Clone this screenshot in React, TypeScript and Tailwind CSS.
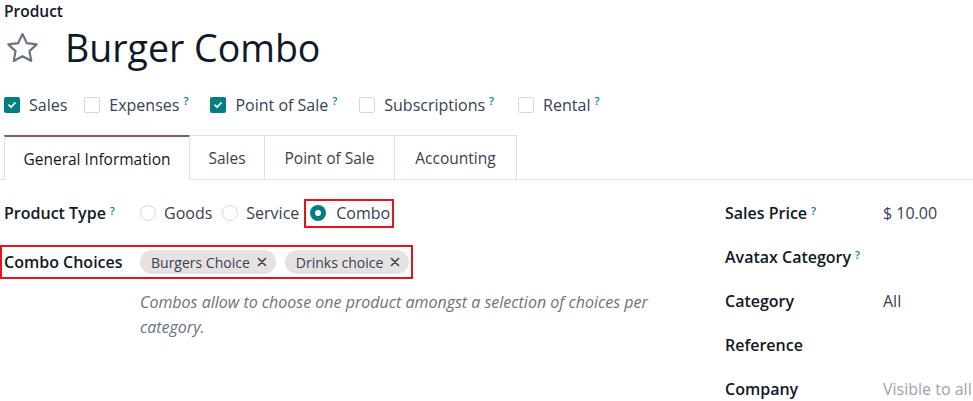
import React from "react";

const Q = () => (
  <sup className="ml-[4px] text-[11px] font-semibold text-[#017e84] relative -top-[4px]">?</sup>
);

const Check = ({ on }: { on: boolean }) =>
  on ? (
    <span className="block shrink-0 w-4 h-4 rounded-[2px] bg-[#017e84] flex items-center justify-center">
      <svg width="10" height="10" viewBox="0 0 10 10">
        <path d="M2 5.2 L4.1 7.2 L8 3" fill="none" stroke="white" strokeWidth="1.8" strokeLinecap="round" strokeLinejoin="round" />
      </svg>
    </span>
  ) : (
    <span className="block shrink-0 w-4 h-4 rounded-[2px] border border-[#d5d8dc] bg-white" />
  );

const Radio = ({ on }: { on: boolean }) =>
  on ? (
    <span className="block shrink-0 w-4 h-4 rounded-full bg-[#017e84] flex items-center justify-center">
      <span className="block w-[6px] h-[6px] rounded-full bg-white" />
    </span>
  ) : (
    <span className="block shrink-0 w-4 h-4 rounded-full border border-[#d5d8dc] bg-white" />
  );

const Tag = ({ label }: { label: string }) => (
  <span className="shrink-0 whitespace-nowrap h-[24px] flex items-center gap-[7px] rounded-full bg-[#e7e2e2] pl-[11px] pr-[9px] text-[14px] text-[#374151]">
    {label}
    <svg width="10" height="10" viewBox="0 0 10 10">
      <path d="M1.5 1.5 L8.5 8.5 M8.5 1.5 L1.5 8.5" stroke="#374151" strokeWidth="1.6" strokeLinecap="round" />
    </svg>
  </span>
);

const CB = ({ on, label, q }: { on: boolean; label: string; q?: boolean }) => (
  <div className="flex items-center">
    <Check on={on} />
    <span className="ml-[9px]">{label}</span>
    {q ? <Q /> : null}
  </div>
);

export default function App() {
  const font = { fontFamily: '"Open Sans", "Noto Sans", sans-serif' };
  return (
    <div className="w-[973px] h-[401px] overflow-hidden bg-white text-[#374151]" style={font}>
      <div className="pl-[4px] pt-[1px] text-[15.5px] font-semibold leading-[20px] text-[#111827]">Product</div>
      <div className="flex items-center pl-[4px] h-[52px] mt-[1px]">
        <svg width="37" height="37" viewBox="0 0 24 24" className="shrink-0">
          <path
            d="M12 2.6 L14.8 8.5 L21.2 9.3 L16.5 13.7 L17.7 20.1 L12 17 L6.3 20.1 L7.5 13.7 L2.8 9.3 L9.2 8.5 Z"
            fill="none"
            stroke="#6b7280"
            strokeWidth="1.4"
            strokeLinejoin="round"
          />
        </svg>
        <span className="ml-[24px] text-[37.5px] leading-[44px] text-[#111827]">Burger Combo</span>
      </div>
      <div className="flex items-center pl-[4px] h-[28px] mt-[17px] text-[16px] text-[#374151]">
        <CB on label="Sales" />
        <div className="ml-[17px]"><CB on={false} label="Expenses" q /></div>
        <div className="ml-[22px]"><CB on label="Point of Sale" q /></div>
        <div className="ml-[22px]"><CB on={false} label="Subscriptions" q /></div>
        <div className="ml-[24px]"><CB on={false} label="Rental" q /></div>
      </div>
      <div className="mt-[16px] flex border-b border-[#dee2e6] h-[45px] text-[15.5px] text-[#374151]">
        <div className="ml-[4px] w-[186px] pt-[3px] flex items-center justify-center border-t-2 border-t-[#7c5a73] border-x border-x-[#dee2e6] bg-white -mb-px text-[#111827]">
          General Information
        </div>
        <div className="w-[75px] pt-[3px] flex items-center justify-center border-t border-r border-[#dee2e6]">Sales</div>
        <div className="w-[130px] pt-[3px] flex items-center justify-center border-t border-r border-[#dee2e6]">Point of Sale</div>
        <div className="w-[122px] pt-[3px] flex items-center justify-center border-t border-r border-[#dee2e6]">Accounting</div>
      </div>
      <div className="flex">
        <div className="w-[700px]">
          <div className="flex items-center h-[28px] mt-[19px] text-[16px]">
            <div className="w-[140px] pl-[4px] font-semibold text-[#111827]">
              Product Type<Q />
            </div>
            <div className="flex items-center">
              <Radio on={false} />
              <span className="ml-[8px]">Goods</span>
              <span className="ml-[10px]"><Radio on={false} /></span>
              <span className="ml-[8px]">Service</span>
              <div className="ml-[5px] flex items-center border-2 border-[#e3141c] h-[29px] pl-[4px] pr-[2px]">
                <Radio on />
                <span className="ml-[10px]">Combo</span>
              </div>
            </div>
          </div>
          <div className="mt-[18px] w-[413px] h-[34px] border-2 border-[#e3141c] flex items-center">
            <div className="w-[138px] shrink-0 pl-[2px] text-[16px] font-semibold text-[#111827]">Combo Choices</div>
            <div className="flex items-center gap-[9px]">
              <Tag label="Burgers Choice" />
              <Tag label="Drinks choice" />
            </div>
          </div>
          <p className="ml-[140px] mt-[11px] w-[540px] text-[16px] leading-[25px] italic text-[#6b7280]">
            Combos allow to choose one product amongst a selection of choices per category.
          </p>
        </div>
        <div className="pl-[25px] pt-[19px] text-[16px]">
          {[
            ["Sales Price", "$ 10.00", true, false],
            ["Avatax Category", "", true, false],
            ["Category", "All", false, false],
            ["Reference", "", false, false],
            ["Company", "Visible to all", false, true],
          ].map(([l, v, q, muted], i) => (
            <div key={i} className="flex items-center h-[28px] mb-[16px]">
              <div className="w-[158px] font-semibold text-[#111827]">
                {l as string}
                {q ? <Q /> : null}
              </div>
              <div className={muted ? "text-[#9ca3af]" : "text-[#374151]"}>{v as string}</div>
            </div>
          ))}
        </div>
      </div>
    </div>
  );
}
